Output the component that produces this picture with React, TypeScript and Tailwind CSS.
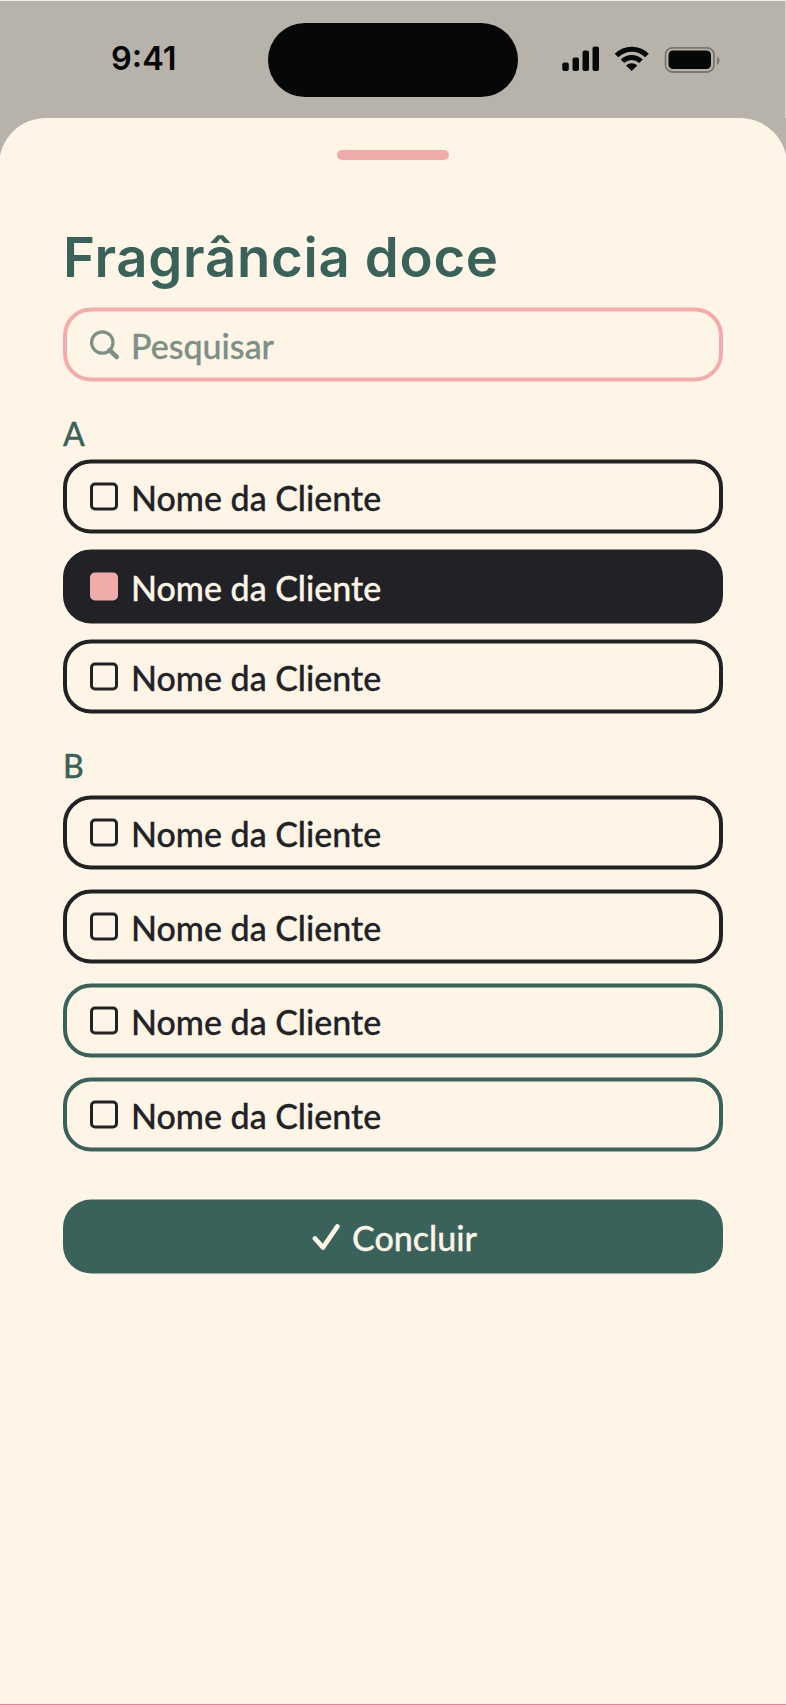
import React from "react";

type Tone = "dark" | "selected" | "green";

const tones: Record<Tone, { row: string; box: string }> = {
  dark: { row: "border-[#212226] text-[#212226]", box: "border-[#212226]" },
  selected: { row: "border-[#212226] bg-[#212226] text-[#fef5e7]", box: "border-[#f2abab] bg-[#f2abab]" },
  green: { row: "border-[#39625a] text-[#212226]", box: "border-[#212226]" },
};

function Label({ children, className }: { children: string; className: string }) {
  return (
    <span className={`pt-[1px] text-[34px] leading-[40px] font-medium [-webkit-text-stroke:0.3px_currentColor] ${className}`}>
      {children}
    </span>
  );
}

function ClientRow({ tone }: { tone: Tone }) {
  return (
    <li className={`flex h-[74px] items-center rounded-[28px] border-4 pl-[23px] ${tones[tone].row}`}>
      <span className={`size-[28px] shrink-0 rounded-[5px] border-[3px] ${tones[tone].box}`} />
      <Label className="ml-[13px]">Nome da Cliente</Label>
    </li>
  );
}

function Group({ letter, rows, className, list }: { letter: string; rows: Tone[]; className: string; list: string }) {
  return (
    <section className={className}>
      <h2 className="text-[32px] leading-[38px] font-medium text-[#39625a] [-webkit-text-stroke:0.3px_currentColor]">{letter}</h2>
      <ul className={`flex flex-col ${list}`}>
        {rows.map((tone, i) => (
          <ClientRow key={i} tone={tone} />
        ))}
      </ul>
    </section>
  );
}

function StatusBar() {
  return (
    <header className="flex h-[118px] items-start border-t border-r border-t-[#efeeeb] border-r-[#d9d6d0]">
      <div className="w-[268px] pt-[38px] pl-[111px] font-[Inter] text-[32.500px] leading-[40px] font-semibold text-[#060807]">9:41</div>
      <div className="mt-[21.500px] h-[74px] w-[250px] rounded-full bg-[#060807]" />
      <svg className="mt-[37px] ml-[37px] shrink-0" width="175" height="42" viewBox="555 38 175 42" fill="#060807">
        <rect x="562.300" y="62.500" width="6.500" height="8.500" rx="2" />
        <rect x="572.500" y="57.500" width="6.500" height="13.500" rx="2" />
        <rect x="582.500" y="50.500" width="6.500" height="20.500" rx="2" />
        <rect x="592.500" y="46.500" width="6.500" height="24.500" rx="2" />
        <g fill="none" stroke="#060807" strokeWidth="5">
          <path d="M616.500 55.500a21.500 21.500 0 0 1 30.500 0" />
          <path d="M622.500 61.300a13.200 13.200 0 0 1 18.500 0" />
        </g>
        <path d="M626 65.400a8.300 8.300 0 0 1 11.400 0L631.700 71Z" />
        <rect x="665.500" y="47.800" width="48.500" height="24.200" rx="7" fill="none" stroke="#7b7871" strokeWidth="1.800" />
        <rect x="668.500" y="50.500" width="42.500" height="18.500" rx="4.500" />
        <path d="M717 56.500q2.500 1.200 2.500 4.200t-2.500 4.200Z" fill="#7b7871" />
      </svg>
    </header>
  );
}

export default function App() {
  return (
    <div className="h-[1705px] w-[786px] overflow-hidden border-b border-[#ef7f8f] bg-[#b7b2aa] font-[Lato,sans-serif]">
      <StatusBar />
      <main className="-mx-[1px] flex h-[1586px] flex-col rounded-t-[47px] bg-[#fef5e7] px-[64px]">
        <div className="mx-auto mt-[32px] h-[9.500px] w-[112px] rounded-full bg-[#f2abab]" />
        <h1 className="mt-[62px] h-[70px] font-[Inter,sans-serif] text-[54.500px] leading-[70px] font-semibold tracking-[0.700px] whitespace-nowrap text-[#39625a]">
          Fragrância doce
        </h1>
        <div className="mt-[15.500px] translate-y-[0.500px]">
          <label className="flex h-[74px] items-center rounded-[28px] border-4 border-[#f4abab] pl-[22px] text-[#7c9085]">
            <svg className="mt-px shrink-0" width="32" height="32" viewBox="0 0 32 32" fill="none" stroke="currentColor">
              <circle cx="13.300" cy="13" r="10.700" strokeWidth="3.200" />
              <path d="M20.500 20.500l7.300 7" strokeWidth="4.600" strokeLinecap="round" />
            </svg>
            <Label className="ml-[10px]">Pesquisar</Label>
          </label>
          <Group letter="A" rows={["dark", "selected", "dark"]} className="mt-[33px]" list="mt-[7px] gap-4" />
          <Group letter="B" rows={["dark", "dark", "green", "green"]} className="mt-[33px]" list="mt-[11px] gap-5" />
          <button className="mt-12 flex h-[74px] w-full items-center justify-center rounded-[28px] bg-[#39625a] pl-[3px] text-[#fef5e7]">
            <svg className="mt-px" width="28" height="28" viewBox="0 0 28 28" fill="none" stroke="currentColor" strokeWidth="4.800" strokeLinecap="round" strokeLinejoin="round">
              <path d="m3 15 8 9L25.300 3" />
            </svg>
            <Label className="ml-3">Concluir</Label>
          </button>
        </div>
      </main>
    </div>
  );
}
